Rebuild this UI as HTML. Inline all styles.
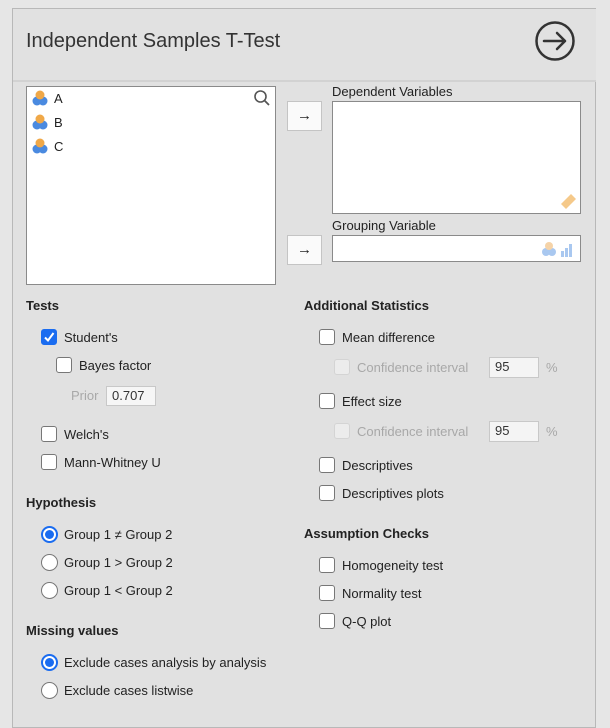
<!DOCTYPE html>
<html><head><style>
body{margin:0;width:610px;height:721px;background:#e6e6e6;font-family:"Liberation Sans",sans-serif;font-size:13px;color:#222;position:relative;overflow:hidden}
.p{position:absolute}
#panel{left:12px;top:8px;width:584px;height:720px;border:1px solid #b8b8b8;background:#e1e1e1;box-sizing:border-box}
.hdr{left:13px;top:9px;width:583px;height:71px;background:#e1e1e1;border-bottom:2px solid #d2d2d2}
.t{position:absolute;line-height:16px;white-space:nowrap}
.h{font-weight:bold}
.cb{position:absolute;width:16px;height:16px;border:1px solid #777;border-radius:3px;background:#fff;box-sizing:border-box}
.cb.dis{border-color:#d4d4d4;background:#ececec}
.rd{position:absolute;width:17px;height:17px;border:1px solid #777;border-radius:50%;background:#fff;box-sizing:border-box}
.rd.on{border:2px solid #1a6cf0}
.rd.on::after{content:"";position:absolute;left:2px;top:2px;width:9px;height:9px;border-radius:50%;background:#1a6cf0}
.box{position:absolute;background:#fff;border:1px solid #8a8a8a;box-sizing:border-box}
.btn{position:absolute;width:35px;height:30px;background:#fafafa;border:1px solid #c4c4c4;box-sizing:border-box;text-align:center;line-height:27px;font-size:15px}
.inp{position:absolute;border:1px solid #c8c8c8;background:#f4f4f4;box-sizing:border-box;line-height:18px;padding-left:5px;color:#333}
.g{color:#a8a8a8}
</style></head><body>
<div class="p" id="panel"></div>
<div class="p hdr"></div>
<div class="t" style="left:26px;top:29px;font-size:20px;line-height:24px;color:#333">Independent Samples T-Test</div>
<svg class="p" style="left:534px;top:20px" width="42" height="42"><circle cx="21" cy="21" r="18.5" fill="none" stroke="#333" stroke-width="2.5"/><path d="M10 21H31M23 13L31 21L23 29" fill="none" stroke="#333" stroke-width="2.5" stroke-linecap="round" stroke-linejoin="round"/></svg>

<div class="box" style="left:26px;top:86px;width:250px;height:199px"></div>
<svg class="p" style="left:32px;top:89px" width="18" height="70">
<g id="ic"><circle cx="5" cy="12" r="4.5" fill="#4a8ae0"/><circle cx="11" cy="12" r="4.5" fill="#4a8ae0"/><circle cx="8" cy="6" r="4.5" fill="#f0a848"/></g>
<use href="#ic" y="24"/><use href="#ic" y="48"/></svg>
<div class="t" style="left:54px;top:91px">A</div>
<div class="t" style="left:54px;top:115px">B</div>
<div class="t" style="left:54px;top:139px">C</div>
<svg class="p" style="left:253px;top:89px" width="18" height="18"><circle cx="7.5" cy="7.5" r="5.5" fill="none" stroke="#555" stroke-width="1.6"/><path d="M11.5 11.5L16 16" stroke="#555" stroke-width="1.8"/></svg>

<div class="btn" style="left:287px;top:101px">→</div>
<div class="btn" style="left:287px;top:235px">→</div>
<div class="t" style="left:332px;top:84px">Dependent Variables</div>
<div class="box" style="left:332px;top:101px;width:249px;height:113px"></div>
<svg class="p" style="left:558px;top:191px" width="20" height="20"><path d="M3 13L13 3L18 8L8 18Z" fill="#f5c98a"/></svg>
<div class="t" style="left:332px;top:218px">Grouping Variable</div>
<div class="box" style="left:332px;top:235px;width:249px;height:27px"></div>
<svg class="p" style="left:541px;top:240px" width="36" height="18"><circle cx="5" cy="12" r="4" fill="#a9c8f0"/><circle cx="11" cy="12" r="4" fill="#a9c8f0"/><circle cx="8" cy="6" r="4" fill="#f5d3a8"/><rect x="20" y="11" width="3" height="6" fill="#a9c8f0"/><rect x="24" y="8" width="3" height="9" fill="#a9c8f0"/><rect x="28" y="4" width="3" height="13" fill="#a9c8f0"/></svg>

<div class="t h" style="left:26px;top:298px">Tests</div>
<div class="cb" style="left:41px;top:329px;background:#1a6cf0;border-color:#1a6cf0"><svg width="14" height="14" style="position:absolute;left:0;top:0"><path d="M3 7.5L6 10.5L11.5 3" fill="none" stroke="#fff" stroke-width="2"/></svg></div>
<div class="t" style="left:64px;top:330px">Student's</div>
<div class="cb" style="left:56px;top:357px"></div>
<div class="t" style="left:79px;top:358px">Bayes factor</div>
<div class="t g" style="left:71px;top:388px">Prior</div>
<div class="inp" style="left:106px;top:386px;width:50px;height:20px;background:#f6f6f6">0.707</div>
<div class="cb" style="left:41px;top:426px"></div>
<div class="t" style="left:64px;top:427px">Welch's</div>
<div class="cb" style="left:41px;top:454px"></div>
<div class="t" style="left:64px;top:455px">Mann-Whitney U</div>

<div class="t h" style="left:26px;top:495px">Hypothesis</div>
<div class="rd on" style="left:41px;top:526px"></div><div class="t" style="left:64px;top:527px">Group 1 ≠ Group 2</div>
<div class="rd" style="left:41px;top:554px"></div><div class="t" style="left:64px;top:555px">Group 1 &gt; Group 2</div>
<div class="rd" style="left:41px;top:582px"></div><div class="t" style="left:64px;top:583px">Group 1 &lt; Group 2</div>

<div class="t h" style="left:26px;top:623px">Missing values</div>
<div class="rd on" style="left:41px;top:654px"></div><div class="t" style="left:64px;top:655px">Exclude cases analysis by analysis</div>
<div class="rd" style="left:41px;top:682px"></div><div class="t" style="left:64px;top:683px">Exclude cases listwise</div>

<div class="t h" style="left:304px;top:298px">Additional Statistics</div>
<div class="cb" style="left:319px;top:329px"></div><div class="t" style="left:342px;top:330px">Mean difference</div>
<div class="cb dis" style="left:334px;top:359px"></div><div class="t g" style="left:357px;top:360px">Confidence interval</div>
<div class="inp" style="left:489px;top:357px;width:50px;height:21px">95</div><div class="t g" style="left:546px;top:360px">%</div>
<div class="cb" style="left:319px;top:393px"></div><div class="t" style="left:342px;top:394px">Effect size</div>
<div class="cb dis" style="left:334px;top:423px"></div><div class="t g" style="left:357px;top:424px">Confidence interval</div>
<div class="inp" style="left:489px;top:421px;width:50px;height:21px">95</div><div class="t g" style="left:546px;top:424px">%</div>
<div class="cb" style="left:319px;top:457px"></div><div class="t" style="left:342px;top:458px">Descriptives</div>
<div class="cb" style="left:319px;top:485px"></div><div class="t" style="left:342px;top:486px">Descriptives plots</div>

<div class="t h" style="left:304px;top:526px">Assumption Checks</div>
<div class="cb" style="left:319px;top:557px"></div><div class="t" style="left:342px;top:558px">Homogeneity test</div>
<div class="cb" style="left:319px;top:585px"></div><div class="t" style="left:342px;top:586px">Normality test</div>
<div class="cb" style="left:319px;top:613px"></div><div class="t" style="left:342px;top:614px">Q-Q plot</div>
</body></html>
